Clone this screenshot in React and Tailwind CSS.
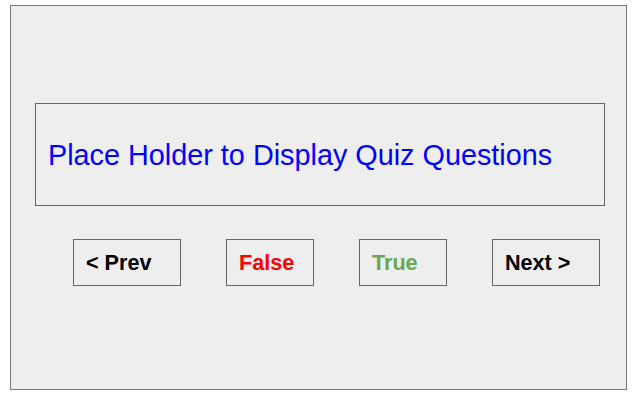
const buttons = [
  { label: "< Prev", color: "text-black", width: "w-[108px]" },
  { label: "False", color: "text-[#ff0000]", width: "w-[88px]" },
  { label: "True", color: "text-[#6aa84f]", width: "w-[88px]" },
  { label: "Next >", color: "text-black", width: "w-[108px]" },
];

export default function App() {
  return (
    <div className="w-[635px] h-[402px] bg-white pt-[5px] pl-[10px] font-['Liberation_Sans',Arial,sans-serif]">
      <div className="w-[617px] h-[385px] border border-[#777] bg-[#eeeeee] pt-[97px] pl-[24px]">
        <div className="w-[570px] h-[103px] border border-[#666] flex items-center pl-[12px] pt-[2px]">
          <span className="text-[28.8px] text-[#0000ff] leading-none">
            Place Holder to Display Quiz Questions
          </span>
        </div>
        <div className="flex gap-[45px] mt-[33px] pl-[38px]">
          {buttons.map((b) => (
            <button
              key={b.label}
              className={`${b.width} h-[47px] border border-[#666] bg-[#eeeeee] flex items-center pl-[12px] pt-[1px] text-[21.6px] font-bold leading-none ${b.color}`}
            >
              {b.label}
            </button>
          ))}
        </div>
      </div>
    </div>
  );
}
